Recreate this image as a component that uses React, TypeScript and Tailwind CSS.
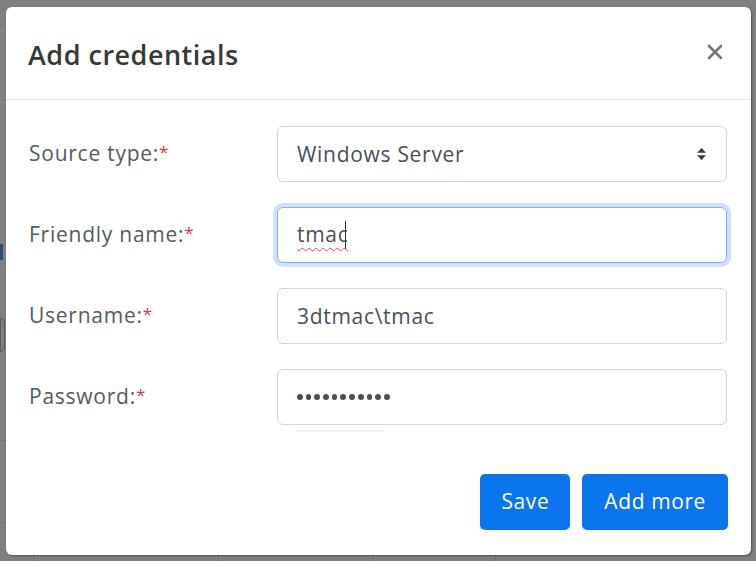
import React from "react";

const font = { fontFamily: '"Open Sans", "Noto Sans", "Liberation Sans", sans-serif' };

function Label({ text }: { text: string }) {
  return (
    <div className="w-[251px] shrink-0 pl-[3px] text-[21px] tracking-[0.75px] text-[#555b61]">
      {text}
      <span className="text-[#dc3545] text-[17px] relative top-[-3px]">*</span>
    </div>
  );
}

export default function App() {
  return (
    <div className="relative w-[756px] h-[561px] overflow-hidden bg-[#7f7f7f]" style={font}>
      {/* faint background page hints */}
      <div className="absolute left-0 top-[30px] w-[6px] h-px bg-[#8a8a8a]" />
      <div className="absolute left-0 top-[102px] w-[6px] h-px bg-[#8a8a8a]" />
      <div className="absolute left-0 top-[244px] w-[3px] h-[16px] bg-[#2c4f7a]" />
      <div className="absolute left-0 top-[318px] w-[5px] h-[34px] border border-[#5a5a5a] rounded-r" />
      <div className="absolute left-0 top-[440px] w-[6px] h-px bg-[#727272]" />
      <div className="absolute left-0 top-[522px] w-[6px] h-px bg-[#727272]" />
      <div className="absolute left-[33px] top-[555px] w-px h-[6px] bg-[#6f6f6f]" />
      <div className="absolute left-[218px] top-[555px] w-px h-[6px] bg-[#6f6f6f]" />
      <div className="absolute left-[372px] top-[555px] w-px h-[6px] bg-[#6f6f6f]" />
      <div className="absolute left-[495px] top-[555px] w-px h-[6px] bg-[#6f6f6f]" />

      {/* modal */}
      <div className="absolute left-[6px] top-[7px] w-[745px] h-[548px] bg-white rounded-[6px] shadow-[1px_1px_2px_rgba(0,0,0,0.35)] flex flex-col">
        <div className="h-[93px] border-b border-[#dee2e6] flex items-center justify-between pl-[22px] pr-[28px]">
          <div className="text-[27px] font-semibold text-[#383838] tracking-[0.5px] mt-[4px]">Add credentials</div>
          <svg width="16" height="16" viewBox="0 0 16 16" className="mt-[-2px]">
            <path d="M2 2 L14 14 M14 2 L2 14" stroke="#767676" strokeWidth="2.6" strokeLinecap="round" />
          </svg>
        </div>

        <div className="flex flex-col gap-[25px] pl-[20px] pt-[26px]">
          <div className="flex items-center">
            <Label text="Source type:" />
            <div className="w-[450px] h-[56px] border border-[#ced4da] rounded-[6px] flex items-center justify-between pl-[19px] pr-[19px] text-[21px] tracking-[0.7px] text-[#495057]">
              <span className="mt-[2px]">Windows Server</span>
              <svg width="11" height="14" viewBox="0 0 11 14">
                <path d="M5.5 1 L10 5.8 L1 5.8 Z M5.5 13 L10 8.2 L1 8.2 Z" fill="#343a40" />
              </svg>
            </div>
          </div>

          <div className="flex items-center">
            <Label text="Friendly name:" />
            <div className="w-[450px] h-[56px] border border-[#86a8f2] rounded-[6px] shadow-[0_0_0_4px_rgba(100,150,245,0.3)] flex items-center pl-[19px] text-[21px] tracking-[0.7px] text-[#495057]">
              <span className="underline decoration-wavy decoration-[#ef4444] decoration-1 underline-offset-[5px]">tmac</span>
              <span className="w-px h-[28px] bg-[#333] ml-[-3px]" />
            </div>
          </div>

          <div className="flex items-center">
            <Label text="Username:" />
            <div className="w-[450px] h-[56px] border border-[#ced4da] rounded-[6px] flex items-center pl-[19px] text-[21px] tracking-[0.7px] text-[#495057]">
              <span className="mt-[2px]">3dtmac\tmac</span>
            </div>
          </div>

          <div className="flex items-center">
            <Label text="Password:" />
            <div className="relative w-[450px] h-[56px] border border-[#ced4da] rounded-[6px] flex items-center pl-[19px] gap-[3px]">
              {Array.from({ length: 11 }).map((_, i) => (
                <span key={i} className="w-[5.7px] h-[5.7px] rounded-full bg-[#495057]" />
              ))}
              <div className="absolute left-[18px] top-[60px] w-[88px] h-[2px] bg-[#eef3fb]" />
            </div>
          </div>
        </div>

        <div className="flex justify-end gap-[12px] pr-[23px] mt-[49px]">
          <button className="h-[56px] px-[21px] rounded-[5px] bg-[#0a75ec] text-white text-[21px] tracking-[0.6px]">Save</button>
          <button className="h-[56px] px-[22px] rounded-[5px] bg-[#0a75ec] text-white text-[21px] tracking-[0.6px]">Add more</button>
        </div>
      </div>
    </div>
  );
}
